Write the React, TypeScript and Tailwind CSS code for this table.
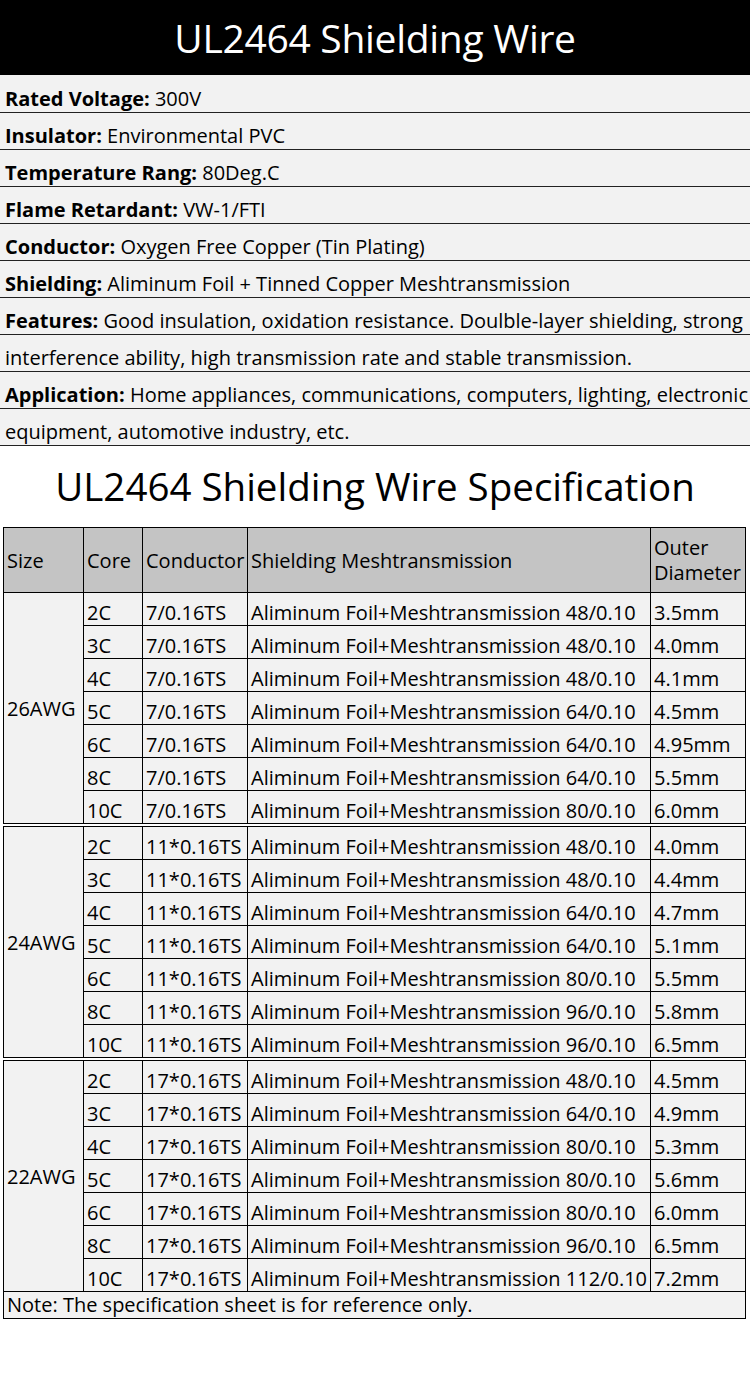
import React from "react";

const font = { fontFamily: '"Open Sans", "Noto Sans", sans-serif' };

const specs: [string, string][] = [
  ["Rated Voltage:", " 300V"],
  ["Insulator:", " Environmental PVC"],
  ["Temperature Rang:", " 80Deg.C"],
  ["Flame Retardant:", " VW-1/FTI"],
  ["Conductor:", " Oxygen Free Copper (Tin Plating)"],
  ["Shielding:", " Aliminum Foil + Tinned Copper Meshtransmission"],
];

type Row = [string, string, string, string];
const groups: { size: string; rows: Row[] }[] = [
  {
    size: "26AWG",
    rows: [
      ["2C", "7/0.16TS", "Aliminum Foil+Meshtransmission 48/0.10", "3.5mm"],
      ["3C", "7/0.16TS", "Aliminum Foil+Meshtransmission 48/0.10", "4.0mm"],
      ["4C", "7/0.16TS", "Aliminum Foil+Meshtransmission 48/0.10", "4.1mm"],
      ["5C", "7/0.16TS", "Aliminum Foil+Meshtransmission 64/0.10", "4.5mm"],
      ["6C", "7/0.16TS", "Aliminum Foil+Meshtransmission 64/0.10", "4.95mm"],
      ["8C", "7/0.16TS", "Aliminum Foil+Meshtransmission 64/0.10", "5.5mm"],
      ["10C", "7/0.16TS", "Aliminum Foil+Meshtransmission 80/0.10", "6.0mm"],
    ],
  },
  {
    size: "24AWG",
    rows: [
      ["2C", "11*0.16TS", "Aliminum Foil+Meshtransmission 48/0.10", "4.0mm"],
      ["3C", "11*0.16TS", "Aliminum Foil+Meshtransmission 48/0.10", "4.4mm"],
      ["4C", "11*0.16TS", "Aliminum Foil+Meshtransmission 64/0.10", "4.7mm"],
      ["5C", "11*0.16TS", "Aliminum Foil+Meshtransmission 64/0.10", "5.1mm"],
      ["6C", "11*0.16TS", "Aliminum Foil+Meshtransmission 80/0.10", "5.5mm"],
      ["8C", "11*0.16TS", "Aliminum Foil+Meshtransmission 96/0.10", "5.8mm"],
      ["10C", "11*0.16TS", "Aliminum Foil+Meshtransmission 96/0.10", "6.5mm"],
    ],
  },
  {
    size: "22AWG",
    rows: [
      ["2C", "17*0.16TS", "Aliminum Foil+Meshtransmission 48/0.10", "4.5mm"],
      ["3C", "17*0.16TS", "Aliminum Foil+Meshtransmission 64/0.10", "4.9mm"],
      ["4C", "17*0.16TS", "Aliminum Foil+Meshtransmission 80/0.10", "5.3mm"],
      ["5C", "17*0.16TS", "Aliminum Foil+Meshtransmission 80/0.10", "5.6mm"],
      ["6C", "17*0.16TS", "Aliminum Foil+Meshtransmission 80/0.10", "6.0mm"],
      ["8C", "17*0.16TS", "Aliminum Foil+Meshtransmission 96/0.10", "6.5mm"],
      ["10C", "17*0.16TS", "Aliminum Foil+Meshtransmission 112/0.10", "7.2mm"],
    ],
  },
];

function Cols() {
  return (
    <colgroup>
      <col className="w-[80px]" />
      <col className="w-[59px]" />
      <col className="w-[105px]" />
      <col className="w-[403px]" />
      <col className="w-[95px]" />
    </colgroup>
  );
}

const cell = "border border-black px-[3px] pt-[6px] pb-0 whitespace-nowrap align-middle";

function GroupRows({ g }: { g: { size: string; rows: Row[] } }) {
  return (
    <>
      {g.rows.map((r, i) => (
        <tr key={i} className="h-[33px]">
          {i === 0 && (
            <td rowSpan={7} className="border border-black px-[3px] align-middle">
              {g.size}
            </td>
          )}
          <td className={cell}>{r[0]}</td>
          <td className={cell}>{r[1]}</td>
          <td className={cell}>{r[2]}</td>
          <td className={cell}>{r[3]}</td>
        </tr>
      ))}
    </>
  );
}

const line = "h-[37px] border-b border-[#222] flex items-end pb-[3px] pl-[5px] text-[20px] leading-none whitespace-nowrap";

export default function App() {
  return (
    <div className="w-[750px] h-[1380px] bg-white text-black overflow-hidden" style={font}>
      <div className="h-[75px] bg-black flex items-center justify-center">
        <span className="text-white text-[39px] leading-none tracking-[-0.3px]">UL2464 Shielding Wire</span>
      </div>
      <div className="bg-[#f2f2f2] pt-[1px]">
        {specs.map(([k, v], i) => (
          <div key={i} className={line}>
            <span className="font-bold">{k}</span>
            <span className="whitespace-pre">{v}</span>
          </div>
        ))}
        <div className={line}>
          <span className="font-bold">Features:</span>
          <span className="whitespace-pre"> Good insulation, oxidation resistance. Doulble-layer shielding, strong</span>
        </div>
        <div className={line}>
          interference ability, high transmission rate and stable transmission.
        </div>
        <div className={line}>
          <span className="font-bold">Application:</span>
          <span className="whitespace-pre"> Home appliances, communications, computers, lighting, electronic</span>
        </div>
        <div className={line}>
          equipment, automotive industry, etc.
        </div>
      </div>
      <div className="h-[81px] flex items-center justify-center">
        <span className="text-[38.5px] leading-none">UL2464 Shielding Wire Specification</span>
      </div>
      <div className="pl-[3px] text-[20px] leading-tight">
        <table className="table-fixed border-collapse w-[742px] bg-[#f2f2f2]">
          <Cols />
          <tbody>
            <tr className="h-[65px] bg-[#c4c4c4]">
              <td className="border border-black px-[3px]">Size</td>
              <td className="border border-black px-[3px]">Core</td>
              <td className="border border-black px-[3px] whitespace-nowrap">Conductor</td>
              <td className="border border-black px-[3px]">Shielding Meshtransmission</td>
              <td className="border border-black px-[3px] leading-[25px]">Outer<br />Diameter</td>
            </tr>
            <GroupRows g={groups[0]} />
          </tbody>
        </table>
        <table className="table-fixed border-collapse w-[742px] bg-[#f2f2f2] mt-[2px]">
          <Cols />
          <tbody>
            <GroupRows g={groups[1]} />
          </tbody>
        </table>
        <table className="table-fixed border-collapse w-[742px] bg-[#f2f2f2] mt-[2px]">
          <Cols />
          <tbody>
            <GroupRows g={groups[2]} />
            <tr className="h-[27px]">
              <td colSpan={5} className="border border-black px-[3px] leading-none whitespace-nowrap">
                Note: The specification sheet is for reference only.
              </td>
            </tr>
          </tbody>
        </table>
      </div>
    </div>
  );
}
